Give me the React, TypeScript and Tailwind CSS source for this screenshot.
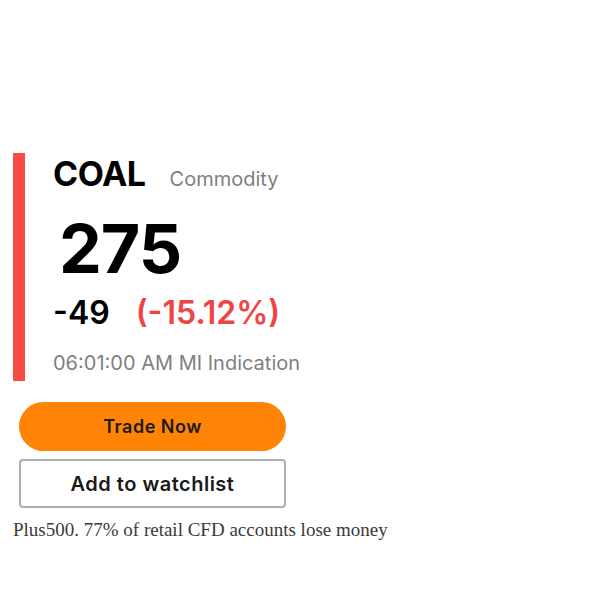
import React from 'react';

export default function App() {
  return (
    <div className="w-[600px] h-[600px] bg-white pt-[153px] font-['Inter',sans-serif]">
      <div className="flex pl-[13px]">
        <div className="w-[12px] h-[228px] bg-[#f94a46] shrink-0" />
        <div className="pl-[28px] flex flex-col">
          <div className="flex items-baseline mt-[1px] h-[40px]">
            <span className="text-[34px] font-bold text-black tracking-[-0.5px] leading-[40px]">COAL</span>
            <span className="ml-[24px] text-[20px] text-[#7f7f7f] leading-[40px]">Commodity</span>
          </div>
          <div className="mt-[14px] ml-[6px] text-[68px] font-bold text-black leading-[80px] tracking-[-1px]">275</div>
          <div className="flex items-baseline mt-[1px] h-[48px]">
            <span className="text-[32px] font-semibold text-black leading-[48px]">-49</span>
            <span className="ml-[26px] text-[32px] font-semibold text-[#ef4444] leading-[48px]">(-15.12%)</span>
          </div>
          <div className="mt-[12px] text-[20px] text-[#7f7f7f] leading-[28px] whitespace-nowrap">06:01:00 AM MI Indication</div>
        </div>
      </div>
      <div className="pl-[19px] mt-[21px] flex flex-col gap-[8px] w-[286px]">
        <button className="h-[49px] w-[267px] rounded-full bg-[#ff8304] text-[18px] font-semibold text-[#1a1a1a] tracking-[0.5px]">Trade Now</button>
        <button className="h-[49px] w-[267px] rounded-[4px] border-2 border-[#a8b0b8] bg-white text-[20px] font-semibold text-[#1a1a1a] tracking-[0.5px]">Add to watchlist</button>
      </div>
      <div className="pl-[13px] mt-[10px] font-['Liberation_Serif',serif] text-[19px] text-[#3a3a3a] leading-[24px] whitespace-nowrap">Plus500. 77% of retail CFD accounts lose money</div>
    </div>
  );
}
